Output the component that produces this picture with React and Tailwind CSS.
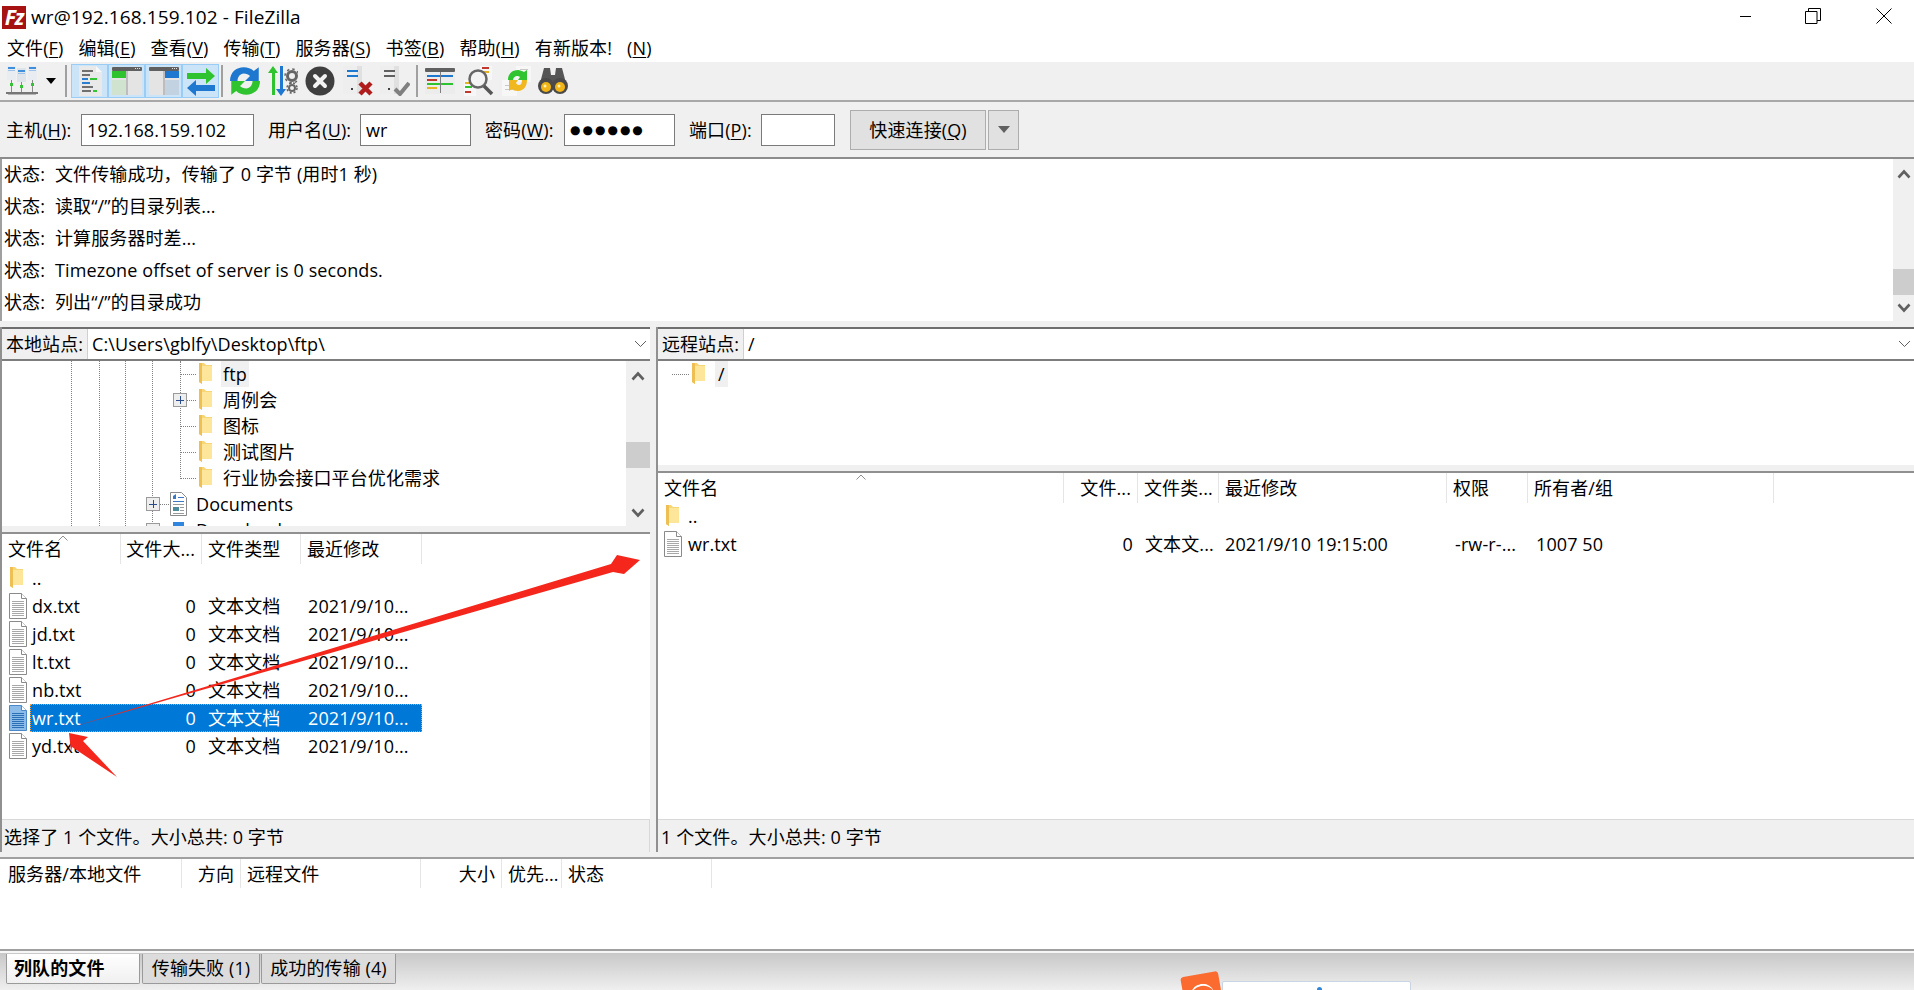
import React from "react";

const Mn = ({ children }) => <span className="underline underline-offset-2">{children}</span>;

const Folder = () => (
  <svg width="15" height="24" viewBox="0 0 15 24" className="shrink-0">
    <path d="M1 1h5l2 2h6v16H4v3l-3-2z" fill="#f7d675" />
    <path d="M4 4h10v15H4z" fill="#fde59a" />
    <path d="M1 1h3v21l-3-2z" fill="#eebf52" />
  </svg>
);

const FileIco = ({ active }) => (
  <svg width="18" height="26" viewBox="0 0 18 26" className="shrink-0">
    <path d="M.5.5h12l5 5v20H.5z" fill={active ? "#8bbbe8" : "#fff"} stroke={active ? "#4a88c7" : "#8a8a8a"} />
    <path d="M12.5.5v5h5" fill="#fff" stroke={active ? "#4a88c7" : "#8a8a8a"} />
    {[8, 10, 12, 14, 16, 18, 20, 22].map((y) => (
      <rect key={y} x="3" y={y} width="12" height="1" fill={active ? "#2d6fb5" : "#a8a8a8"} />
    ))}
  </svg>
);

const DocsIco = () => (
  <svg width="17" height="24" viewBox="0 0 17 24" className="shrink-0">
    <path d="M.5.5h11l5 5v18H.5z" fill="#fff" stroke="#8a8a8a" />
    <path d="M3 4l3-2v5H3z" fill="#3b78c4" />
    <rect x="8" y="5" width="6" height="1" fill="#3b78c4" />
    <rect x="3" y="9" width="11" height="1" fill="#3b78c4" />
    <rect x="3" y="12" width="11" height="1" fill="#9a9a9a" />
    <rect x="3" y="15" width="6" height="4" fill="#4d8a9a" />
    <rect x="10" y="15" width="4" height="1" fill="#9a9a9a" />
    <rect x="10" y="18" width="4" height="1" fill="#9a9a9a" />
    <rect x="3" y="21" width="11" height="1" fill="#9a9a9a" />
  </svg>
);

const Chevron = ({ up, thin }) =>
  thin ? (
    <svg width="13" height="8" viewBox="0 0 13 8" className="shrink-0">
      <path d="M1 1l5.500 5.500L12 1" fill="none" stroke="#606060" strokeWidth="1" />
    </svg>
  ) : (
    <svg width="14" height="10" viewBox="0 0 14 10" className="shrink-0">
      <path d={up ? "M1.500 8.500L7 2.500l5.500 6" : "M1.500 1.500L7 7.500l5.500-6"} fill="none" stroke="#606060" strokeWidth="2.600" />
    </svg>
  );

const Plus = () => (
  <div className="w-[14px] h-[14px] shrink-0 border border-[#9a9a9a] bg-[#eeeeee] flex items-center justify-center relative">
    <div className="w-[8px] h-[1px] bg-[#2b4c8c]" />
    <div className="w-[1px] h-[8px] bg-[#2b4c8c] absolute" />
  </div>
);

const Dash = ({ w }) => <div className={`${w} h-0 border-t border-dotted border-[#808080] shrink-0`} />;

const SiteManagerIco = () => (
  <svg width="32" height="32" viewBox="0 0 32 32">
    <rect x="1" y="1" width="9" height="14" fill="#e9edf2" />
    <rect x="2" y="2" width="7" height="2" fill="#3f8fdc" />
    <rect x="2" y="5" width="7" height="1" fill="#9cc3ea" />
    <rect x="11" y="3" width="9" height="14" fill="#dfe4ea" />
    <rect x="12" y="5" width="7" height="2" fill="#3f8fdc" />
    <rect x="12" y="8" width="7" height="1" fill="#9cc3ea" />
    <rect x="22" y="1" width="9" height="14" fill="#e9edf2" />
    <rect x="23" y="2" width="7" height="2" fill="#3f8fdc" />
    <rect x="23" y="5" width="7" height="1" fill="#9cc3ea" />
    <rect x="5" y="15" width="1" height="13" fill="#8a8a8a" />
    <rect x="15" y="17" width="1" height="11" fill="#8a8a8a" />
    <rect x="26" y="15" width="1" height="13" fill="#8a8a8a" />
    <rect x="4" y="18" width="3" height="3" fill="#35c435" />
    <rect x="14" y="20" width="3" height="3" fill="#35c435" />
    <rect x="25" y="18" width="3" height="3" fill="#35c435" />
    <rect x="0" y="27" width="32" height="2" fill="#777777" />
    <rect x="2" y="29" width="28" height="1" fill="#b5b5b5" />
  </svg>
);

const LogIco = () => (
  <svg width="30" height="32" viewBox="0 0 30 32">
    <path d="M4 1h17l6 6v24H4z" fill="#e9e9e9" />
    <path d="M21 1l6 6h-6z" fill="#f8f8f8" />
    <rect x="7" y="5" width="11" height="2" fill="#707070" />
    <rect x="7" y="9" width="8" height="2" fill="#707070" />
    <rect x="7" y="13" width="6" height="2" fill="#2a7fd0" />
    <rect x="15" y="13" width="7" height="2" fill="#35c435" />
    <rect x="7" y="17" width="8" height="2" fill="#2a7fd0" />
    <rect x="7" y="21" width="11" height="2" fill="#707070" />
    <rect x="7" y="25" width="9" height="2" fill="#707070" />
    <rect x="18" y="25" width="4" height="2" fill="#35c435" />
  </svg>
);

const PaneIco = ({ right }) => (
  <svg width="30" height="30" viewBox="0 0 30 30">
    <rect x="0" y="1" width="30" height="28" rx="1" fill="#e4e4e4" />
    <rect x="0" y="1" width="30" height="4" rx="1" fill="#606060" />
    <rect x="23" y="2" width="1" height="1" fill="#e0e0e0" />
    <rect x="25" y="2" width="1" height="1" fill="#e0e0e0" />
    <rect x="27" y="2" width="1" height="1" fill="#e0e0e0" />
    {right ? (
      <>
        <rect x="16" y="5" width="14" height="7" fill="#1e78cf" />
        <rect x="16" y="14" width="14" height="15" fill="#c3d2e0" />
      </>
    ) : (
      <>
        <rect x="0" y="5" width="14" height="7" fill="#2fc42f" />
        <rect x="0" y="14" width="14" height="15" fill="#cfe3cf" />
      </>
    )}
    <rect x="14" y="5" width="2" height="24" fill="#bdbdbd" />
  </svg>
);

const TransferIco = () => (
  <svg width="30" height="30" viewBox="0 0 30 30">
    <path d="M1 7h19V2l9 8-9 8v-5H1z" fill="#2fc42f" />
    <path d="M29 19H10v-5l-9 8 9 8v-5h19z" fill="#1e78cf" />
  </svg>
);

const RefreshIco = () => (
  <svg width="30" height="30" viewBox="3 3 24 24">
    <path d="M3 15C3 8 8 4 14 4c3 0 6 1 8 3l4-3v11H15l4-4c-1-1-3-2-5-2-3 0-5 3-5 6z" fill="#1e78cf" />
    <path d="M27 15c0 7-5 11-11 11-3 0-6-1-8-3l-4 3V15h11l-4 4c1 1 3 2 5 2 3 0 5-3 5-6z" fill="#2fc42f" />
  </svg>
);

const ProcessIco = () => (
  <svg width="30" height="32" viewBox="0 0 30 32">
    <path d="M5 1l5 7H7v22H4V8H0z" fill="#2fc42f" />
    <path d="M13 31l5-7h-3V1h-3v23H8z" fill="#1e78cf" />
    <circle cx="24" cy="11" r="4.500" fill="none" stroke="#666" strokeWidth="3" />
    <circle cx="24" cy="11" r="7" fill="none" stroke="#666" strokeWidth="1.500" strokeDasharray="2.500 3" />
    <circle cx="24" cy="23" r="3" fill="none" stroke="#666" strokeWidth="2" />
    <circle cx="24" cy="23" r="5" fill="none" stroke="#666" strokeWidth="1.500" strokeDasharray="2 2" />
  </svg>
);

const CancelIco = () => (
  <svg width="30" height="30" viewBox="0 0 30 30">
    <circle cx="15" cy="15" r="14.500" fill="#3f3f3f" />
    <path d="M10 10l10 10M20 10L10 20" stroke="#f2f2f2" strokeWidth="4" strokeLinecap="round" />
  </svg>
);

const DisconnectIco = () => (
  <svg width="30" height="30" viewBox="0 0 30 30">
    <rect x="0" y="0" width="19" height="28" fill="#eeeeee" />
    <rect x="14" y="0" width="5" height="28" fill="#e0e0e0" />
    <rect x="4" y="4" width="11" height="2" fill="#1e78cf" />
    <rect x="4" y="9" width="11" height="2" fill="#1e78cf" />
    <rect x="8" y="22" width="2" height="2" fill="#404040" />
    <path d="M17 17l11 11M28 17L17 28" stroke="#b01c1c" strokeWidth="4.500" />
  </svg>
);

const ReconnectIco = () => (
  <svg width="30" height="30" viewBox="0 0 30 30">
    <rect x="0" y="0" width="19" height="28" fill="#eeeeee" />
    <rect x="14" y="0" width="5" height="28" fill="#e0e0e0" />
    <rect x="4" y="4" width="11" height="2" fill="#606060" />
    <rect x="4" y="9" width="11" height="2" fill="#606060" />
    <rect x="8" y="22" width="2" height="2" fill="#404040" />
    <path d="M15 23l5 5 9-11" fill="none" stroke="#808080" strokeWidth="4" />
  </svg>
);

const FilterIco = () => (
  <svg width="30" height="30" viewBox="0 0 30 30">
    <rect x="0" y="2" width="30" height="26" fill="#ececec" />
    <rect x="0" y="2" width="30" height="4" rx="1" fill="#606060" />
    <rect x="2" y="9" width="14" height="2" fill="#1e78cf" />
    <rect x="16" y="9" width="12" height="2" fill="#1e78cf" />
    <rect x="2" y="13" width="10" height="2" fill="#c0392b" />
    <rect x="2" y="17" width="14" height="2" fill="#2fc42f" />
    <rect x="16" y="17" width="12" height="2" fill="#2fc42f" />
    <rect x="2" y="21" width="10" height="2" fill="#e6b422" />
    <rect x="15" y="6" width="1" height="21" fill="#808080" />
  </svg>
);

const SearchIco = () => (
  <svg width="30" height="32" viewBox="0 0 30 32">
    <rect x="16" y="1" width="12" height="14" fill="#f7f7f7" />
    <rect x="18" y="2" width="7" height="2" fill="#c0392b" />
    <rect x="18" y="6" width="7" height="2" fill="#e6b422" />
    <rect x="0" y="15" width="12" height="16" fill="#f7f7f7" />
    <rect x="1" y="17" width="6" height="2" fill="#e6b422" />
    <rect x="1" y="21" width="7" height="2" fill="#2fc42f" />
    <rect x="1" y="26" width="6" height="2" fill="#c0392b" />
    <circle cx="14" cy="14" r="8.500" fill="#f4f4f4" fillOpacity="0.700" stroke="#666" strokeWidth="2.500" />
    <path d="M20 21l8 8" stroke="#555" strokeWidth="3.500" />
  </svg>
);

const SyncIco = () => (
  <svg width="30" height="32" viewBox="0 0 30 32">
    <rect x="14" y="1" width="15" height="16" fill="#f7f7f7" />
    <rect x="0" y="15" width="15" height="16" fill="#f7f7f7" />
    <rect x="18" y="4" width="8" height="1" fill="#c8c8c8" />
    <rect x="3" y="20" width="8" height="1" fill="#c8c8c8" />
    <rect x="3" y="24" width="8" height="1" fill="#c8c8c8" />
    <path d="M6 15c0-6 4-10 10-10 2 0 4 1 6 2l3-2v10h-9l2-3c-1-1-2-1-3-1-2 0-4 2-4 4z" fill="#2fc42f" />
    <path d="M25 15c0 7-4 11-9 11-3 0-5-1-6-2l-3 2V15h9l-2 3c1 1 1 2 3 2s3-2 3-5z" fill="#f0b71f" />
  </svg>
);

const BinocularsIco = () => (
  <svg width="30" height="30" viewBox="0 0 30 30">
    <path d="M6 2h6l1 7h4l1-7h6l5 19H1z" fill="#555555" />
    <circle cx="8" cy="20" r="8" fill="#4a4a4a" />
    <circle cx="22" cy="20" r="8" fill="#4a4a4a" />
    <circle cx="8" cy="21" r="5" fill="#f2b518" />
    <circle cx="22" cy="21" r="5" fill="#f2b518" />
    <circle cx="7" cy="20" r="1.500" fill="#fff2b0" />
    <circle cx="21" cy="20" r="1.500" fill="#fff2b0" />
  </svg>
);

const Sep = () => <div className="w-[2px] h-[32px] bg-[#a0a0a0] shrink-0" />;

const Toggled = ({ children }) => (
  <div className="w-[37px] h-[34px] bg-[#cce4f7] border border-[#99cdf5] flex items-center justify-center shrink-0">{children}</div>
);

const Field = ({ w, children }) => (
  <div className={`${w} h-[32px] bg-white border border-[#7a7a7a] flex items-center px-[5px] shrink-0`}>{children}</div>
);

const SiteBar = ({ label, path, labelW }) => (
  <div className="h-[32px] flex items-center bg-white border-b-2 border-[#7d7d7d] shrink-0">
    <div className={`${labelW} h-full bg-[#f0f0f0] flex items-center justify-center shrink-0 border-r border-[#d0d0d0]`}>{label}</div>
    <div className="flex-1 pl-[4px]">{path}</div>
    <div className="pr-[2px] pl-[2px] mr-[1px]"><Chevron thin /></div>
  </div>
);

const HeaderCell = ({ w, right, children }) => (
  <div className={`${w} h-full flex items-center border-r border-[#e5e5e5] shrink-0 whitespace-nowrap ${right ? "justify-end pr-[6px]" : "pl-[6px]"}`}>
    {children}
  </div>
);

const localFiles = ["dx.txt", "jd.txt", "lt.txt", "nb.txt", "wr.txt", "yd.txt"];

const LocalRow = ({ name }) => {
  const active = name === "wr.txt";
  return (
    <div className="flex h-[28px] items-center">
      <div className="w-[28px] pl-[7px] shrink-0"><FileIco active={active} /></div>
      <div className={`flex h-full items-center w-[392px] ${active ? "bg-[#0078d7] text-white outline-1 outline-dotted -outline-offset-1 outline-[#e8a050]" : ""}`}>
        <div className="w-[92px] pl-[2px]">{name}</div>
        <div className="w-[80px] text-right pr-[6px]">0</div>
        <div className="w-[99px] pl-[6px]">文本文档</div>
        <div className="w-[121px] pl-[7px] whitespace-nowrap">2021/9/10...</div>
      </div>
    </div>
  );
};

export default function App() {
  return (
    <div className="relative w-[1914px] h-[990px] flex flex-col overflow-hidden bg-[#f0f0f0] text-[18px] tracking-[0.1px] leading-none text-black [font-family:'Open_Sans','Noto_Sans_CJK_SC',sans-serif]">
      {/* title bar */}
      <div className="h-[32px] bg-white flex items-center shrink-0 relative">
        <div className="ml-[2px] mt-[2px] w-[24px] h-[23px] bg-[#a61212] text-white font-bold italic text-[21px] flex items-center justify-center tracking-tighter">Fz</div>
        <div className="ml-[5px] mt-[3px] text-[19px]">wr@192.168.159.102 - FileZilla</div>
        <div className="ml-auto flex items-center h-full">
          <div className="w-[11px] h-[1px] bg-black mr-[54px]" />
          <svg width="16" height="16" viewBox="0 0 16 16" className="mr-[55px]">
            <path d="M.5 3.500h11.500v12H.5zM3.500 3.500V.5h12v12h-3.500" fill="none" stroke="#000" />
          </svg>
          <svg width="16" height="16" viewBox="0 0 16 16" className="mr-[22px]">
            <path d="M.5.5l15 15M15.500.5l-15 15" stroke="#000" strokeWidth="1" />
          </svg>
        </div>
      </div>

      {/* menu */}
      <div className="h-[30px] bg-white flex items-center pl-[7px] pt-[2px] gap-[15px] shrink-0">
        <span>文件(<Mn>F</Mn>)</span>
        <span>编辑(<Mn>E</Mn>)</span>
        <span>查看(<Mn>V</Mn>)</span>
        <span>传输(<Mn>T</Mn>)</span>
        <span>服务器(<Mn>S</Mn>)</span>
        <span>书签(<Mn>B</Mn>)</span>
        <span>帮助(<Mn>H</Mn>)</span>
        <span>有新版本!</span>
        <span>(<Mn>N</Mn>)</span>
      </div>

      {/* toolbar */}
      <div className="h-[40px] flex items-center shrink-0 border-b-2 border-[#a8a8a8] pl-[6px]">
        <SiteManagerIco />
        <div className="ml-[8px] mr-[9px] w-0 h-0 border-x-[5.500px] border-x-transparent border-t-[6px] border-t-black" />
        <Sep />
        <div className="flex ml-[4px] mr-[2px]">
          <Toggled><LogIco /></Toggled>
          <Toggled><PaneIco /></Toggled>
          <Toggled><PaneIco right /></Toggled>
          <Toggled><TransferIco /></Toggled>
        </div>
        <Sep />
        <div className="ml-[7px]"><RefreshIco /></div>
        <div className="ml-[8px]"><ProcessIco /></div>
        <div className="ml-[7px]"><CancelIco /></div>
        <div className="ml-[8px]"><DisconnectIco /></div>
        <div className="ml-[7px]"><ReconnectIco /></div>
        <div className="ml-[6px]"><Sep /></div>
        <div className="ml-[7px]"><FilterIco /></div>
        <div className="ml-[9px]"><SearchIco /></div>
        <div className="ml-[8px]"><SyncIco /></div>
        <div className="ml-[6px]"><BinocularsIco /></div>
      </div>

      {/* quick connect */}
      <div className="h-[57px] flex items-center shrink-0 border-b-2 border-[#8c8c8c] pl-[6px]">
        <span className="w-[75px]">主机(<Mn>H</Mn>):</span>
        <Field w="w-[173px]">192.168.159.102</Field>
        <span className="w-[92px] ml-[14px] whitespace-nowrap">用户名(<Mn>U</Mn>):</span>
        <Field w="w-[111px]">wr</Field>
        <span className="w-[79px] ml-[14px] whitespace-nowrap">密码(<Mn>W</Mn>):</span>
        <Field w="w-[111px]"><span className="text-[12px] tracking-[2px] [font-family:'DejaVu_Sans',sans-serif]">●●●●●●</span></Field>
        <span className="w-[72px] ml-[14px] whitespace-nowrap">端口(<Mn>P</Mn>):</span>
        <Field w="w-[74px]" />
        <div className="ml-[15px] w-[136px] h-[40px] bg-[#e1e1e1] border border-[#adadad] flex items-center justify-center shrink-0">快速连接(<Mn>Q</Mn>)</div>
        <div className="ml-[2px] w-[31px] h-[40px] bg-[#e1e1e1] border border-[#adadad] flex items-center justify-center shrink-0">
          <div className="w-0 h-0 border-x-[6px] border-x-transparent border-t-[7px] border-t-[#606060]" />
        </div>
      </div>

      {/* message log */}
      <div className="h-[162px] bg-white flex shrink-0 border-l-2 border-[#a0a0a0]">
        <div className="flex-1 flex flex-col -mt-[1px] pl-[2px]">
          {[
            "文件传输成功，传输了 0 字节 (用时1 秒)",
            "读取“/”的目录列表...",
            "计算服务器时差...",
            "Timezone offset of server is 0 seconds.",
            "列出“/”的目录成功",
          ].map((m) => (
            <div key={m} className="h-[32px] flex items-center">
              <span className="w-[51px] shrink-0">状态:</span>
              <span>{m}</span>
            </div>
          ))}
        </div>
        <div className="w-[21px] shrink-0 bg-[#f0f0f0] flex flex-col items-center pt-[10px]">
          <Chevron up />
          <div className="w-full h-[26px] bg-[#cdcdcd] mt-[90px]" />
          <div className="mt-[8px]"><Chevron /></div>
        </div>
      </div>

      {/* site panes */}
      <div className="h-[536px] flex items-start pt-[6px] shrink-0">
        <div className="w-[650px] h-[525px] flex flex-col border-l-2 border-[#909090] shrink-0">
          <div className="h-[2px] bg-[#6e6e6e] shrink-0" />
          <SiteBar label="本地站点:" labelW="w-[86px]" path="C:\Users\gblfy\Desktop\ftp\" />
          <div className="h-[165px] bg-white flex overflow-hidden shrink-0">
            <div className="flex-1 relative overflow-hidden">
              <div className="absolute left-[69px] top-0 h-full border-l border-dotted border-[#808080]" />
              <div className="absolute left-[97px] top-0 h-full border-l border-dotted border-[#808080]" />
              <div className="absolute left-[123px] top-0 h-full border-l border-dotted border-[#808080]" />
              <div className="absolute left-[150px] top-0 h-full border-l border-dotted border-[#808080]" />
              <div className="absolute left-[178px] top-0 h-[118px] border-l border-dotted border-[#808080]" />
              <div className="h-[26px] flex items-center pl-[178px]">
                <Dash w="w-[16px]" />
                <div className="ml-[2px]"><Folder /></div>
                <span className="ml-[8px] bg-[#f0f0f0] h-[26px] px-[2px] flex items-center">ftp</span>
              </div>
              <div className="h-[26px] flex items-center pl-[171px] relative">
                <Plus />
                <Dash w="w-[9px]" />
                <div className="ml-[2px]"><Folder /></div>
                <span className="ml-[10px]">周例会</span>
              </div>
              {["图标", "测试图片", "行业协会接口平台优化需求"].map((t) => (
                <div key={t} className="h-[26px] flex items-center pl-[178px]">
                  <Dash w="w-[16px]" />
                  <div className="ml-[2px]"><Folder /></div>
                  <span className="ml-[10px]">{t}</span>
                </div>
              ))}
              <div className="h-[26px] flex items-center pl-[144px]">
                <Plus />
                <Dash w="w-[9px]" />
                <div className="ml-[1px]"><DocsIco /></div>
                <span className="ml-[9px]">Documents</span>
              </div>
              <div className="h-[26px] flex items-center pl-[144px]">
                <Plus />
                <Dash w="w-[9px]" />
                <div className="ml-[4px] w-[11px] h-[16px] bg-[#2f86dc] shrink-0" />
                <span className="ml-[12px]">Downloads</span>
              </div>
            </div>
            <div className="w-[24px] shrink-0 bg-[#f0f0f0] flex flex-col items-center pt-[10px]">
              <Chevron up />
              <div className="w-full h-[26px] bg-[#cdcdcd] mt-[61px]" />
              <div className="mt-[40px]"><Chevron /></div>
            </div>
          </div>
          <div className="h-[6px] shrink-0" />
          <div className="h-[287px] bg-white flex flex-col border-t-2 border-[#909090] shrink-0 relative">
            <div className="h-[30px] flex shrink-0">
              <HeaderCell w="w-[119px]">文件名</HeaderCell>
              <HeaderCell w="w-[81px]" right>文件大...</HeaderCell>
              <HeaderCell w="w-[99px]">文件类型</HeaderCell>
              <HeaderCell w="w-[121px]">最近修改</HeaderCell>
            </div>
            <svg width="10" height="6" viewBox="0 0 10 6" className="absolute left-[56px] top-[1px]">
              <path d="M.5 5.500L5 1l4.500 4.500" fill="none" stroke="#909090" />
            </svg>
            <div className="h-[28px] flex items-center">
              <div className="w-[28px] pl-[7px] shrink-0"><Folder /></div>
              <div className="pl-[2px]">..</div>
            </div>
            {localFiles.map((f) => <LocalRow key={f} name={f} />)}
          </div>
          <div className="h-[33px] flex items-center pl-[2px] pt-[1px] border-t border-[#d8d8d8] border-r shrink-0">选择了 1 个文件。大小总共: 0 字节</div>
        </div>

        <div className="w-[6px] shrink-0" />

        <div className="flex-1 h-[525px] flex flex-col border-l-2 border-[#909090] min-w-0">
          <div className="h-[2px] bg-[#6e6e6e] shrink-0" />
          <SiteBar label="远程站点:" labelW="w-[86px]" path="/" />
          <div className="h-[104px] bg-white flex items-start pl-[14px] shrink-0">
            <div className="h-[26px] flex items-center">
              <Dash w="w-[17px]" />
              <div className="ml-[2px]"><Folder /></div>
              <span className="ml-[9px] bg-[#f0f0f0] h-[26px] px-[3px] flex items-center">/</span>
            </div>
          </div>
          <div className="h-[6px] shrink-0" />
          <div className="h-[348px] bg-white flex flex-col border-t-2 border-[#909090] shrink-0 relative">
            <div className="h-[30px] flex shrink-0">
              <HeaderCell w="w-[406px]">文件名</HeaderCell>
              <HeaderCell w="w-[74px]" right>文件...</HeaderCell>
              <HeaderCell w="w-[81px]">文件类...</HeaderCell>
              <HeaderCell w="w-[228px]">最近修改</HeaderCell>
              <HeaderCell w="w-[81px]">权限</HeaderCell>
              <HeaderCell w="w-[246px]">所有者/组</HeaderCell>
            </div>
            <svg width="10" height="6" viewBox="0 0 10 6" className="absolute left-[198px] top-[1px]">
              <path d="M.5 5.500L5 1l4.500 4.500" fill="none" stroke="#909090" />
            </svg>
            <div className="h-[28px] flex items-center -mt-[1px]">
              <div className="w-[28px] pl-[7px] shrink-0"><Folder /></div>
              <div className="pl-[2px]">..</div>
            </div>
            <div className="h-[28px] flex items-center">
              <div className="w-[28px] pl-[6px] shrink-0"><FileIco /></div>
              <div className="w-[378px] pl-[2px]">wr.txt</div>
              <div className="w-[74px] text-right pr-[5px]">0</div>
              <div className="w-[81px] pl-[7px] whitespace-nowrap">文本文...</div>
              <div className="w-[228px] pl-[6px]">2021/9/10 19:15:00</div>
              <div className="w-[81px] pl-[8px] whitespace-nowrap">-rw-r-...</div>
              <div className="pl-[8px]">1007 50</div>
            </div>
          </div>
          <div className="h-[33px] flex items-center pl-[3px] pt-[1px] border-t border-[#d8d8d8] shrink-0">1 个文件。大小总共: 0 字节</div>
        </div>
      </div>

      {/* queue */}
      <div className="h-[94px] bg-white border-y-2 border-[#a0a0a0] shrink-0">
        <div className="h-[29px] flex">
          <HeaderCell w="w-[182px]"><span className="pl-[2px]">服务器/本地文件</span></HeaderCell>
          <HeaderCell w="w-[59px]" right>方向</HeaderCell>
          <HeaderCell w="w-[180px]">远程文件</HeaderCell>
          <HeaderCell w="w-[81px]" right>大小</HeaderCell>
          <HeaderCell w="w-[60px]">优先...</HeaderCell>
          <HeaderCell w="w-[150px]">状态</HeaderCell>
        </div>
      </div>

      {/* queue tabs */}
      <div className="flex-1 relative bg-linear-to-b from-[#c8c8c8] to-[#efefef] border-t-2 border-[#f6f6f6] pl-[6px]">
        <div className="flex h-[30px] mt-[1px]">
          <div className="w-[134px] h-full pb-[2px] bg-linear-to-b from-[#ffffff] to-[#f0f0f0] border-x border-b border-[#9a9a9a] rounded-b-[2px] flex items-center pl-[7px] font-bold">列队的文件</div>
          <div className="w-[118px] ml-[2px] h-full pb-[2px] bg-[#dcdcdc] border-x border-b border-[#9a9a9a] rounded-b-[2px] flex items-center justify-center">传输失败 (1)</div>
          <div className="w-[135px] ml-[1px] h-full pb-[2px] bg-[#dcdcdc] border-x border-b border-[#9a9a9a] rounded-b-[2px] flex items-center justify-center">成功的传输 (4)</div>
        </div>
        {/* floating widget peeking in at the bottom edge */}
        <div className="absolute left-[1182px] top-[21px] w-[38px] h-[24px] bg-[#fb6a2f] rounded-[3px] -rotate-[10deg] overflow-hidden">
          <div className="mx-auto mt-[10px] w-[24px] h-[12px] border-t-2 border-white rounded-t-full" />
        </div>
        <div className="absolute left-[1222px] top-[28px] w-[189px] h-[16px] bg-white border border-[#c9d4e4] rounded-[2px]">
          <div className="absolute left-[94px] top-[5px] w-[5px] h-[3px] bg-[#2f86dc] rounded-t-full" />
        </div>
      </div>

      {/* red annotation arrows */}
      <svg width="1914" height="990" viewBox="0 0 1914 990" className="absolute left-0 top-0 pointer-events-none">
        <polygon points="69,728 613,572 624,574 640,560 617,555 611,564" fill="#f5261b" />
        <polygon points="69,733 88,737 83,741 117,777 72,747 71,752" fill="#f5261b" />
      </svg>
    </div>
  );
}
